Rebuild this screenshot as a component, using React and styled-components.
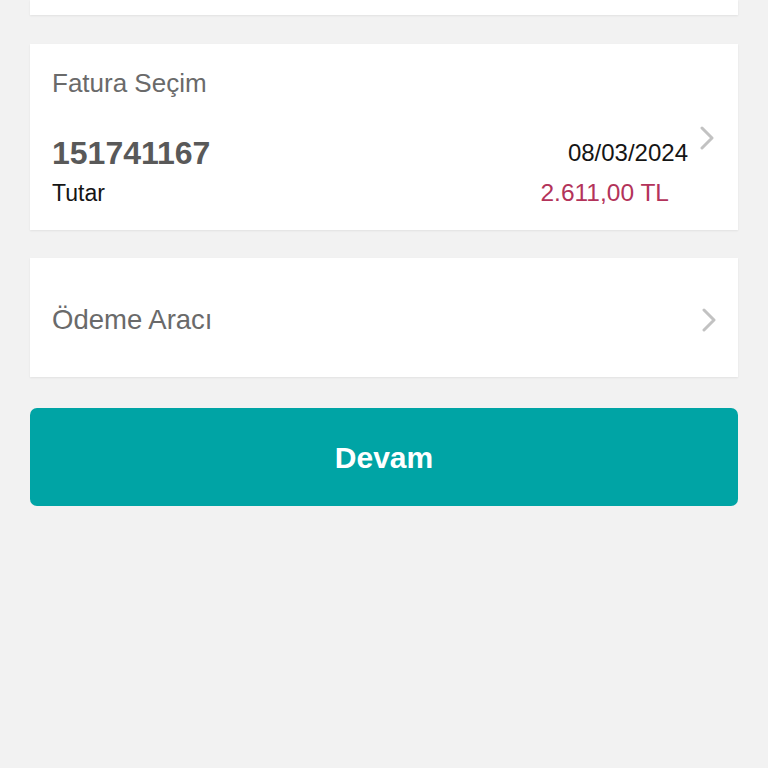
import React from "react";
import styled, { createGlobalStyle } from "styled-components";

const Global = createGlobalStyle`
  html, body { margin: 0; padding: 0; background: #f2f2f2; }
  body { font-family: "Liberation Sans", Arial, sans-serif; -webkit-font-smoothing: antialiased; }
  #root { min-height: 768px; }
`;

const Page = styled.div`
  display: flex;
  flex-direction: column;
  padding: 0 30px;
  min-height: 768px;
  background: #f2f2f2;
`;

const Card = styled.div`
  background: #ffffff;
  box-shadow: 0 1px 2px rgba(0, 0, 0, 0.07);
  margin-top: ${(p) => p.$mt || 0}px;
  height: ${(p) => (p.$h ? `${p.$h}px` : "auto")};
  box-sizing: border-box;
`;

const InvoiceCard = styled(Card)`
  padding: 24px 22px 23px 22px;
`;

const Title = styled.div`
  font-size: ${(p) => p.$size || 26}px;
  line-height: 30px;
  color: #6a6a6a;
`;

const InvoiceGrid = styled.div`
  display: grid;
  grid-template-columns: 1fr auto 28px;
  grid-template-rows: 36px 28px;
  row-gap: 8px;
  margin-top: 37px;
  align-items: center;
`;

const Number = styled.div`
  font-size: 32px;
  font-weight: 700;
  color: #595959;
  line-height: 36px;
`;

const Label = styled.div`
  font-size: 23px;
  color: #151515;
  line-height: 28px;
`;

const Value = styled.div`
  font-size: ${(p) => p.$size || 24}px;
  line-height: 28px;
  text-align: right;
  color: ${(p) => p.$color || "#151515"};
  margin-right: ${(p) => p.$mr || 0}px;
`;

const ChevronBox = styled.div`
  display: flex;
  justify-content: flex-end;
  align-self: ${(p) => p.$align || "center"};
  margin-top: ${(p) => p.$mt || 0}px;
`;

const ChevronIcon = () => (
  <svg width="18" height="24" viewBox="0 0 18 24" fill="none">
    <path d="M4 2 L14 12 L4 22" stroke="#c2c2c2" strokeWidth="3" strokeLinecap="round" strokeLinejoin="round" />
  </svg>
);

const SelectRow = styled(Card)`
  display: flex;
  align-items: center;
  justify-content: space-between;
  padding: 4px 20px 0 22px;
`;

const Button = styled.button`
  margin-top: 31px;
  height: 98px;
  border: none;
  border-radius: 7px;
  background: #00a4a5;
  color: #ffffff;
  font-family: "Liberation Sans", Arial, sans-serif;
  font-size: 30px;
  font-weight: 700;
  padding-top: 2px;
  cursor: pointer;
`;

export default function App() {
  return (
    <>
      <Global />
      <Page>
        <Card $h={15} />
        <InvoiceCard $mt={29} $h={186}>
          <Title>Fatura Seçim</Title>
          <InvoiceGrid>
            <Number>151741167</Number>
            <Value>08/03/2024</Value>
            <ChevronBox $align="start" $mt={-9}>
              <ChevronIcon />
            </ChevronBox>
            <Label>Tutar</Label>
            <Value $color="#b3335a" $mr={19} $size={24.5}>2.611,00 TL</Value>
            <div />
          </InvoiceGrid>
        </InvoiceCard>
        <SelectRow $mt={28} $h={119}>
          <Title $size={27.5}>Ödeme Aracı</Title>
          <ChevronIcon />
        </SelectRow>
        <Button>Devam</Button>
      </Page>
    </>
  );
}
